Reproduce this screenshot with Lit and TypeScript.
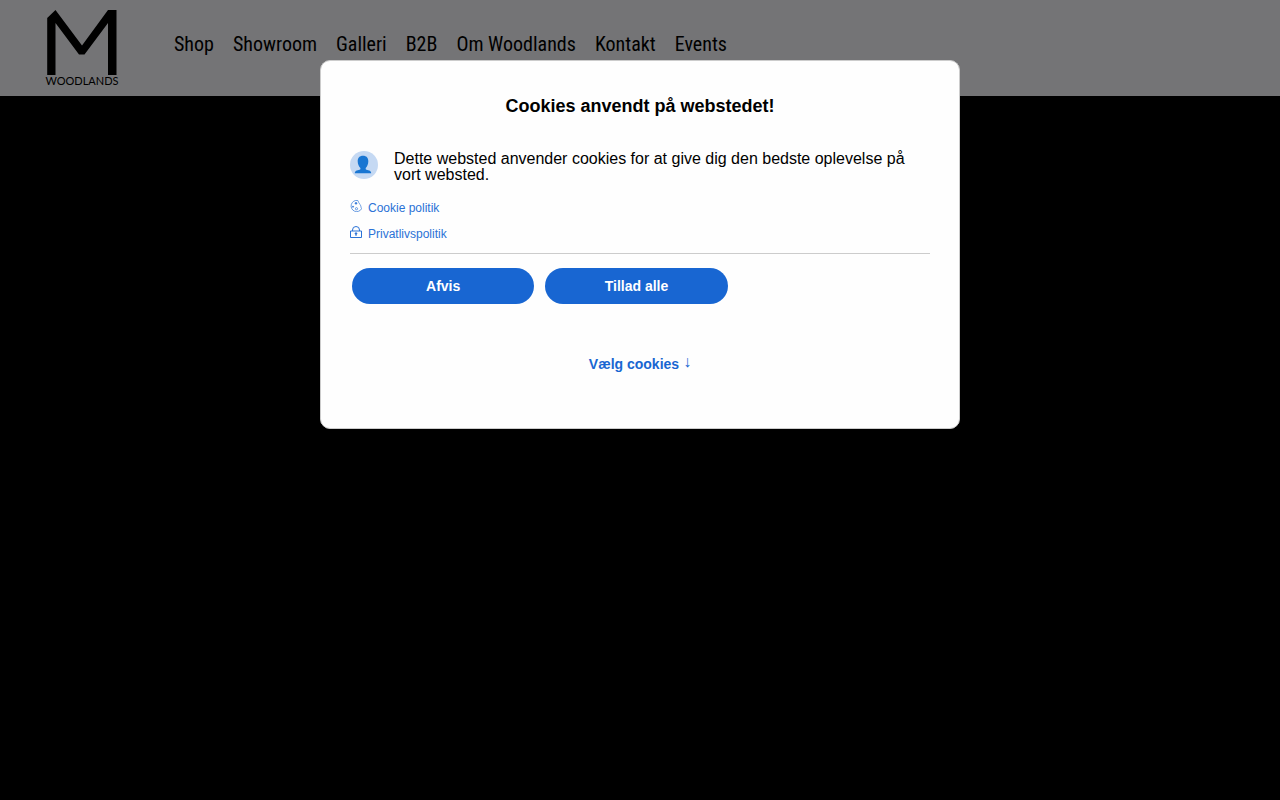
import { LitElement, html, css } from "lit";
import { customElement } from "lit/decorators.js";

const NAV = ["Shop", "Showroom", "Galleri", "B2B", "Om Woodlands", "Kontakt", "Events"];

@customElement("site-header")
class SiteHeader extends LitElement {
  static styles = css`
    :host { display: block; }
    .bar {
      display: flex;
      align-items: flex-start;
      height: 96px;
      box-sizing: border-box;
      padding: 10px 46px 0;
      gap: 56px;
      background: #747476;
    }
    .logo {
      display: flex;
      flex-direction: column;
      align-items: center;
      width: 72px;
      color: #000;
      text-decoration: none;
      font: 11px/12px Lato, sans-serif;
    }
    .logo svg { display: block; }
    .menu { display: flex; gap: 19px; padding-top: 20px; }
    .menu a {
      color: #000;
      text-decoration: none;
      white-space: nowrap;
      font: 20px/28px "Roboto Condensed", "Liberation Sans Narrow", sans-serif;
    }
  `;
  render() {
    return html`<header class="bar">
      <a class="logo" href="#">
        <svg width="72" height="65" viewBox="0 0 72 65" aria-hidden="true">
          <path d="M1.200 65V8L9.500 0L36 35.500L62 0H70.500V65H62V13L38.500 44.500H33L9.500 13V65Z" />
        </svg>
        <span>WOODLANDS</span>
      </a>
      <nav class="menu">${NAV.map((n) => html`<a href="#">${n}</a>`)}</nav>
    </header>`;
  }
}

@customElement("cookie-dialog")
class CookieDialog extends LitElement {
  static styles = css`
    :host { display: block; width: 50%; }
    .card {
      box-sizing: border-box;
      padding: 34px 29px 54px;
      border: 1px solid #ccc;
      border-radius: 10px;
      background: #fefefe;
      color: #000;
      font: 16px/16px "Liberation Sans", Arial, sans-serif;
    }
    h2 { margin: 0; text-align: center; font-size: 18px; line-height: 22px; }
    .intro { display: flex; gap: 16px; margin-top: 34px; }
    .intro p { margin: 0; }
    .intro svg { flex: none; display: block; }
    .links { display: flex; flex-direction: column; gap: 10px; margin: 17px 0 11px; }
    .links a {
      display: flex;
      align-items: flex-start;
      gap: 6px;
      color: #2b72d6;
      text-decoration: none;
      font-size: 12px;
      line-height: 16px;
    }
    .links svg { flex: none; }
    hr { margin: 0; border: 0; border-top: 1px solid #ccc; }
    .actions {
      display: grid;
      grid-template-columns: repeat(3, 1fr);
      gap: 11px;
      padding: 14px 9px 0 2px;
    }
    .actions button {
      height: 36px;
      padding: 0;
      border: 0;
      border-radius: 18px;
      background: #1866d2;
      color: #fff;
      font: bold 14px/18px "Liberation Sans", Arial, sans-serif;
    }
    .choose {
      display: flex;
      align-items: flex-start;
      gap: 4px;
      margin: 50px auto 0;
      padding: 0;
      border: 0;
      background: none;
      color: #1866d2;
      font: bold 14px/20px "Liberation Sans", Arial, sans-serif;
    }
    .arrow { font-size: 16px; line-height: 16px; }
  `;
  render() {
    return html`<section class="card" role="dialog" aria-labelledby="title">
      <h2 id="title">Cookies anvendt på webstedet!</h2>
      <div class="intro">
        <svg width="28" height="28" viewBox="0 0 28 28" aria-hidden="true">
          <circle cx="14" cy="14" r="14" fill="#c5d9f3" />
          <path fill="#1976d2" d="M13 4.800C9.500 4.800 7.700 7 7.700 10.300C7.700 13 8.800 15.500 10.400 17V18.300C8.500 19.500 4.800 19 4.800 22.300H21.200C21.200 19 17.500 19.500 15.700 18.300V17C17.300 15.500 18.300 13 18.300 10.300C18.300 7 16.500 4.800 13 4.800Z" />
        </svg>
        <p>Dette websted anvender cookies for at give dig den bedste oplevelse på vort websted.</p>
      </div>
      <div class="links">
        <a href="#">
          <svg width="12" height="12" viewBox="0 0 12 12" fill="none" stroke="#2b72d6" stroke-width=".7" aria-hidden="true">
            <path d="M7.800 .5A5.600 5.600 0 1 0 11.600 8.700C10.900 7.900 11.300 7.200 10.900 6.500C10.300 5.800 10.900 5.200 10.200 4.600C9.200 4.100 9.600 3.300 9 2.700C8.100 2.300 8.600 1.300 7.800 .5Z" />
            <circle cx="6" cy="3.300" r=".9" fill="#2b72d6" />
            <circle cx="3" cy="6.700" r=".6" fill="#2b72d6" />
            <circle cx="6.500" cy="8.700" r="1.100" />
          </svg>Cookie politik</a>
        <a href="#">
          <svg width="12" height="12" viewBox="0 0 12 12" fill="none" stroke="#2b72d6" aria-hidden="true">
            <path d="M.5 5H11.500V11.500H.5ZM2.500 5V4A3.500 3.500 0 0 1 9.500 4V5" />
            <path d="M6 7V10" /><circle cx="6" cy="7.500" r=".8" fill="#2b72d6" />
          </svg>Privatlivspolitik</a>
      </div>
      <hr />
      <div class="actions">
        <button type="button">Afvis</button>
        <button type="button">Tillad alle</button>
      </div>
      <button type="button" class="choose">Vælg cookies <span class="arrow">↓</span></button>
    </section>`;
  }
}

@customElement("app-root")
class AppRoot extends LitElement {
  static styles = css`
    :host { display: block; min-height: 100vh; background: #000; }
    .overlay {
      position: absolute;
      inset: 60px 0 auto;
      display: flex;
      justify-content: center;
    }
  `;
  render() {
    return html`<site-header></site-header>
      <div class="overlay"><cookie-dialog></cookie-dialog></div>`;
  }
}
